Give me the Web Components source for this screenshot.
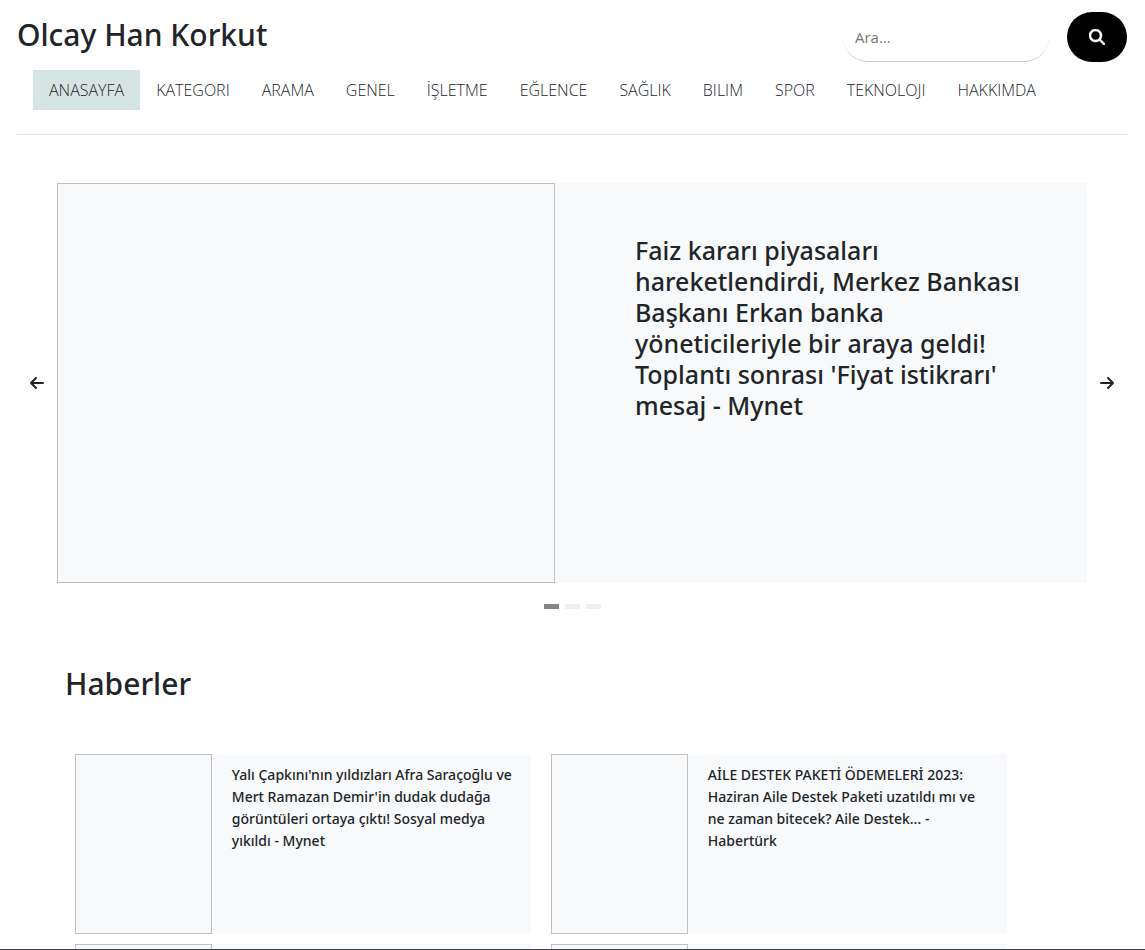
<!DOCTYPE html>
<html lang="tr">
<head>
<meta charset="utf-8">
<meta name="viewport" content="width=device-width, initial-scale=1">
<title>Olcay Han Korkut</title>
<style>
  body { margin: 0; background: #fff; color: #212529; font: 400 16px/24px "Open Sans", "Noto Sans", sans-serif; --heading: "Noto Sans", "Open Sans", sans-serif; }
</style>
</head>
<body>
<news-app>
  <site-header slot="header">
    Olcay Han Korkut
    <search-form slot="search"></search-form>
    <site-nav slot="nav">
      <nav-item current>ANASAYFA</nav-item>
      <nav-item>KATEGORI</nav-item>
      <nav-item>ARAMA</nav-item>
      <nav-item>GENEL</nav-item>
      <nav-item>İŞLETME</nav-item>
      <nav-item>EĞLENCE</nav-item>
      <nav-item>SAĞLIK</nav-item>
      <nav-item>BILIM</nav-item>
      <nav-item>SPOR</nav-item>
      <nav-item>TEKNOLOJI</nav-item>
      <nav-item>HAKKIMDA</nav-item>
    </site-nav>
  </site-header>
  <news-carousel>Faiz kararı piyasaları hareketlendirdi, Merkez Bankası Başkanı Erkan banka yöneticileriyle bir araya geldi! Toplantı sonrası 'Fiyat istikrarı' mesaj - Mynet</news-carousel>
  <news-section>
    <span slot="title">Haberler</span>
    <news-card>Yalı Çapkını'nın yıldızları Afra Saraçoğlu ve Mert Ramazan Demir'in dudak dudağa görüntüleri ortaya çıktı! Sosyal medya yıkıldı - Mynet</news-card>
    <news-card>AİLE DESTEK PAKETİ ÖDEMELERİ 2023: Haziran Aile Destek Paketi uzatıldı mı ve ne zaman bitecek? Aile Destek... - Habertürk</news-card>
    <news-card></news-card>
    <news-card></news-card>
  </news-section>
</news-app>
<script>
const define = (name, html) => customElements.define(name, class extends HTMLElement {
  constructor() {
    super();
    this.attachShadow({ mode: "open" }).innerHTML = html;
  }
});

define("news-app", `
<style>
  :host { display: flex; flex-direction: column; height: 100vh; box-sizing: border-box; border-bottom: 1px solid #41414a; }
  .scroll { flex: 1; min-height: 0; overflow-y: auto; scrollbar-width: none; padding: 0 18px 0 17px; }
</style>
<div class="scroll"><slot name="header"></slot><main><slot></slot></main></div>`);

define("site-header", `
<style>
  :host { display: block; padding: 12px 0 24px; border-bottom: 1px solid #e2e3e4; }
  .top { display: flex; align-items: center; justify-content: space-between; margin-bottom: 8px; }
  h1 { margin: 0; padding-bottom: 4px; font-family: var(--heading); font-size: 30px; line-height: 38px; font-weight: 500; }
</style>
<header>
  <div class="top"><h1><slot></slot></h1><slot name="search"></slot></div>
  <slot name="nav"></slot>
</header>`);

define("search-form", `
<style>
  :host { display: block; }
  form { display: flex; gap: 18px; }
  input { box-sizing: border-box; width: 206px; height: 50px; border: 0; border-bottom: 1px solid #ccc; border-radius: 25px; padding: 0 12px; background: #fff; font: inherit; font-size: 15px; color: inherit; outline: 0; }
  input::placeholder { color: #757575; opacity: 1; }
  button { display: grid; place-items: center; width: 60px; height: 50px; border: 0; border-radius: 25px; background: #000; color: #fff; padding: 0; }
  svg { width: 16px; height: 16px; }
</style>
<form role="search">
  <input type="text" placeholder="Ara..." aria-label="Ara">
  <button type="button" aria-label="Ara">
    <svg viewBox="0 0 512 512" fill="currentColor" aria-hidden="true"><path d="M416 208c0 45.900-14.900 88.300-40 122.700L502.600 457.400c12.500 12.500 12.500 32.800 0 45.300s-32.800 12.500-45.300 0L330.700 376c-34.400 25.200-76.800 40-122.700 40C93.100 416 0 322.900 0 208S93.100 0 208 0S416 93.100 416 208zM208 352a144 144 0 1 0 0-288 144 144 0 1 0 0 288z" stroke="currentColor" stroke-width="16"/></svg>
  </button>
</form>`);

define("site-nav", `
<style>
  :host { display: block; }
  nav { display: flex; flex-wrap: wrap; padding: 0 16px; }
</style>
<nav><slot></slot></nav>`);

define("nav-item", `
<style>
  :host { display: block; }
  a { display: block; padding: 8px 16px; font-size: 16px; line-height: 24px; font-weight: 300; color: #212529; text-decoration: none; white-space: nowrap; }
  :host([current]) a { background: #d7e4e4; }
</style>
<a href="#"><slot></slot></a>`);

define("news-carousel", `
<style>
  :host { display: block; padding-top: 48px; }
  .row { display: grid; grid-template-columns: 40px 1fr 40px; align-items: center; }
  .arrow { display: grid; place-items: center; height: 40px; border: 0; background: none; padding: 0; color: #212529; }
  svg { width: 14px; height: 14px; }
  article { display: grid; grid-template-columns: 498fr 532fr; min-height: 400px; background: #f8f9fa; }
  .image { border: 1px solid #c0c0c0; }
  h2 { margin: 0; padding: 52px 60px 52px 80px; font-family: var(--heading); font-size: 25px; line-height: 31px; font-weight: 500; }
  .dots { display: flex; justify-content: center; gap: 6px; padding: 21px 0; }
  .dots button { width: 15px; height: 5px; border: 0; padding: 0; background: #efefef; }
  .dots button[aria-current] { background: #868686; }
</style>
<section aria-label="Manşet">
  <div class="row">
    <button class="arrow" aria-label="Önceki"><svg viewBox="0 0 14 14" fill="none" stroke="currentColor" stroke-width="2" stroke-linecap="round" stroke-linejoin="round" aria-hidden="true"><path d="M6 2 1 7l5 5M1 7h12"/></svg></button>
    <article><div class="image"></div><h2><slot></slot></h2></article>
    <button class="arrow" aria-label="Sonraki"><svg viewBox="0 0 14 14" fill="none" stroke="currentColor" stroke-width="2" stroke-linecap="round" stroke-linejoin="round" aria-hidden="true"><path d="m8 2 5 5-5 5M13 7H1"/></svg></button>
  </div>
  <div class="dots">
    <button aria-label="1" aria-current="true"></button>
    <button aria-label="2"></button>
    <button aria-label="3"></button>
  </div>
</section>`);

define("news-section", `
<style>
  :host { display: block; padding: 35px 48px 48px; }
  h2 { margin: 0 0 51px; font-family: var(--heading); font-size: 30px; line-height: 38px; font-weight: 500; }
  .grid { display: grid; grid-template-columns: 1fr 1fr; gap: 10px 20px; margin: 0 72px 0 10px; }
</style>
<section>
  <h2><slot name="title"></slot></h2>
  <div class="grid"><slot></slot></div>
</section>`);

define("news-card", `
<style>
  :host { display: block; }
  article { display: grid; grid-template-columns: 3fr 7fr; min-height: 180px; background: #f8f9fa; }
  .image { border: 1px solid #c0c0c0; }
  h3 { margin: 0; padding: 10px 16px 10px 20px; font-family: var(--heading); font-size: 14px; line-height: 22px; font-weight: 500; }
</style>
<article><div class="image"></div><h3><slot></slot></h3></article>`);
</script>
</body>
</html>
